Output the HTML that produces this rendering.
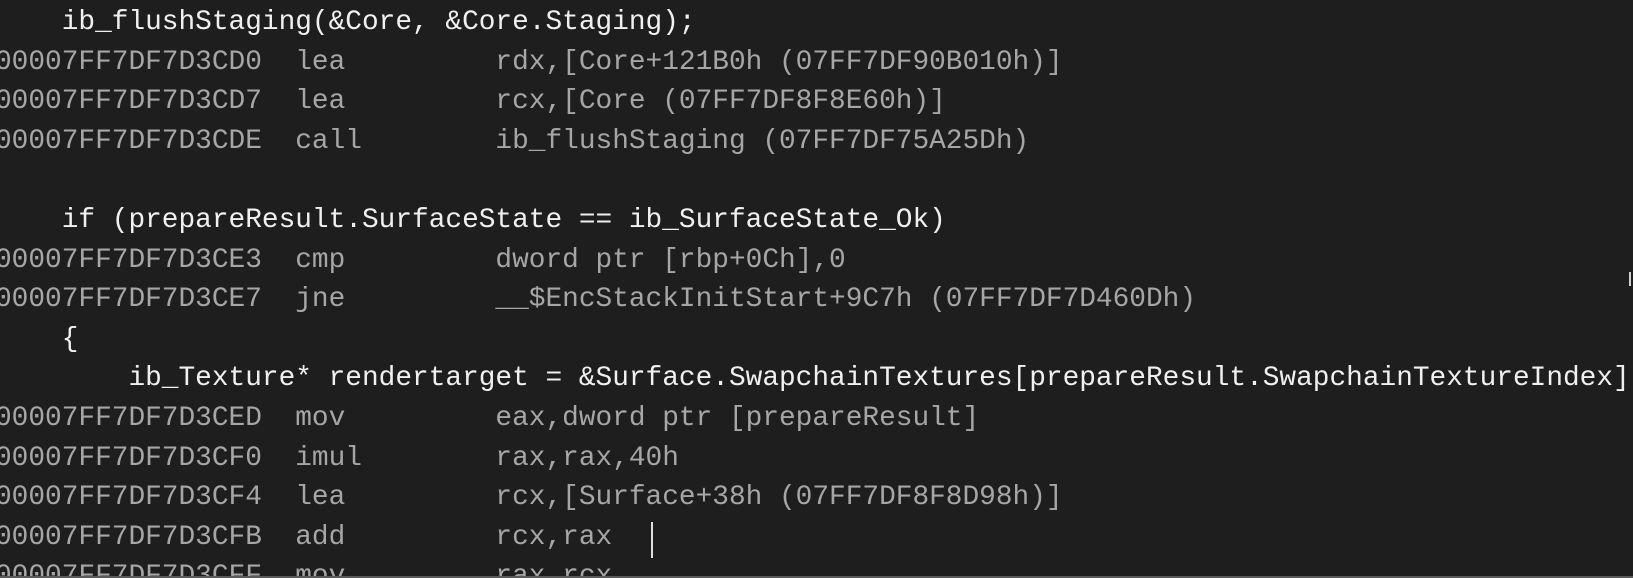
<!DOCTYPE html>
<html><head><meta charset="utf-8"><style>
html,body{margin:0;padding:0;background:#1e1e1e;width:1633px;height:578px;overflow:hidden;position:relative}
.wrap{position:absolute;left:-5px;top:3px;font-family:"Liberation Mono",monospace;font-size:27.8px;line-height:39.6px;white-space:pre}
.s{color:#f0f0f0}
.d{color:#a6a6a6}
.cur{position:absolute;left:651px;top:522px;width:2px;height:36px;background:#e0e0e0}
.bot{position:absolute;left:0;top:576px;width:1633px;height:2px;background:#5a5a5a}
.tick{position:absolute;left:1629px;top:272px;width:2px;height:14px;background:#cfcfcf}
</style></head><body>
<div class="wrap"><div class="s">    ib_flushStaging(&amp;Core, &amp;Core.Staging);</div><div class="d">00007FF7DF7D3CD0  lea         rdx,[Core+121B0h (07FF7DF90B010h)]</div><div class="d">00007FF7DF7D3CD7  lea         rcx,[Core (07FF7DF8F8E60h)]</div><div class="d">00007FF7DF7D3CDE  call        ib_flushStaging (07FF7DF75A25Dh)</div><div class="s"> </div><div class="s">    if (prepareResult.SurfaceState == ib_SurfaceState_Ok)</div><div class="d">00007FF7DF7D3CE3  cmp         dword ptr [rbp+0Ch],0</div><div class="d">00007FF7DF7D3CE7  jne         __$EncStackInitStart+9C7h (07FF7DF7D460Dh)</div><div class="s">    {</div><div class="s">        ib_Texture* rendertarget = &amp;Surface.SwapchainTextures[prepareResult.SwapchainTextureIndex]</div><div class="d">00007FF7DF7D3CED  mov         eax,dword ptr [prepareResult]</div><div class="d">00007FF7DF7D3CF0  imul        rax,rax,40h</div><div class="d">00007FF7DF7D3CF4  lea         rcx,[Surface+38h (07FF7DF8F8D98h)]</div><div class="d">00007FF7DF7D3CFB  add         rcx,rax</div><div class="d">00007FF7DF7D3CFF  mov         rax,rcx</div></div>
<div class="cur"></div>
<div class="tick"></div>
<div class="bot"></div>
</body></html>
